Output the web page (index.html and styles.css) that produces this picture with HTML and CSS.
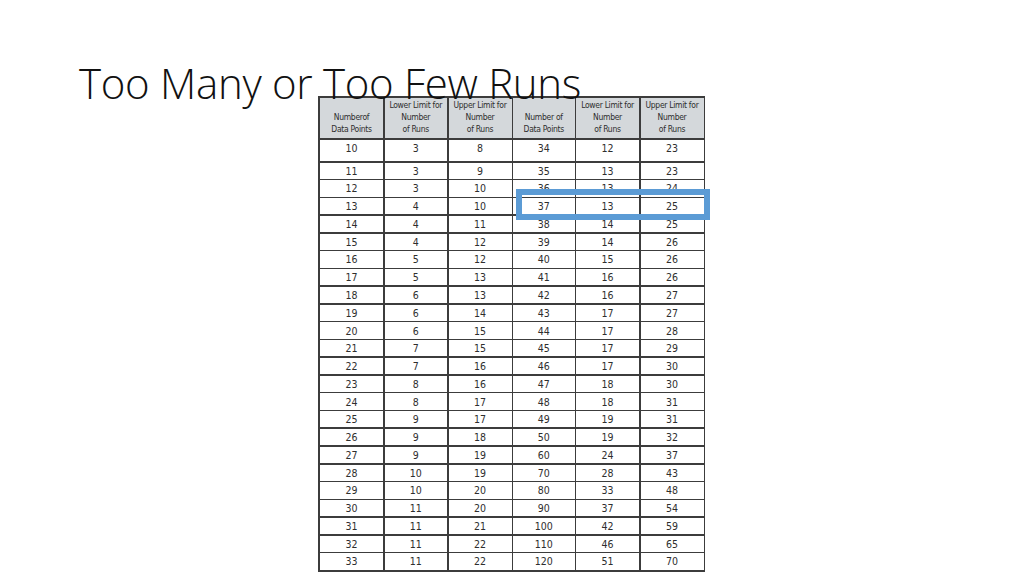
FILE: index.html
```html
<!DOCTYPE html>
<html>
<head>
<meta charset="utf-8">
<link rel="stylesheet" href="styles.css">
</head>
<body>
<div class="slide">
  <div class="title-box"><h1 class="title">Too Many or Too Few Runs</h1></div>
  <div class="table-wrap">
    <div class="grid" id="grid">
      <div class="hd two">Numberof<br>Data Points</div>
      <div class="hd">Lower Limit for<br>Number<br>of Runs</div>
      <div class="hd">Upper Limit for<br>Number<br>of Runs</div>
      <div class="hd two">Number of<br>Data Points</div>
      <div class="hd">Lower Limit for<br>Number<br>of Runs</div>
      <div class="hd">Upper Limit for<br>Number<br>of Runs</div>
    </div>
    <div class="highlight"></div>
  </div>
</div>
<script src="script.js"></script>
</body>
</html>
```
FILE: script.js
```js
const rows = [
  [10,3,8,34,12,23],[11,3,9,35,13,23],[12,3,10,36,13,24],[13,4,10,37,13,25],
  [14,4,11,38,14,25],[15,4,12,39,14,26],[16,5,12,40,15,26],[17,5,13,41,16,26],
  [18,6,13,42,16,27],[19,6,14,43,17,27],[20,6,15,44,17,28],[21,7,15,45,17,29],
  [22,7,16,46,17,30],[23,8,16,47,18,30],[24,8,17,48,18,31],[25,9,17,49,19,31],
  [26,9,18,50,19,32],[27,9,19,60,24,37],[28,10,19,70,28,43],[29,10,20,80,33,48],
  [30,11,20,90,37,54],[31,11,21,100,42,59],[32,11,22,110,46,65],[33,11,22,120,51,70]
];
const grid = document.getElementById('grid');
rows.forEach((r, i) => {
  r.forEach(v => {
    const d = document.createElement('div');
    d.className = i === 0 ? 'cell first' : 'cell';
    d.textContent = v;
    grid.appendChild(d);
  });
});
```
FILE: styles.css
```css
html, body {
  margin: 0;
  padding: 0;
  background: #ffffff;
}
.slide {
  width: 1024px;
  height: 576px;
  overflow: hidden;
  background: #ffffff;
}
.title-box {
  height: 96px;
  box-sizing: border-box;
  padding: 62px 0 0 79px;
  position: relative;
  z-index: 2;
}
.title {
  margin: 0;
  font-family: "Open Sans", "Liberation Sans", sans-serif;
  font-weight: 300;
  font-size: 42px;
  line-height: 42px;
  color: #111111;
  white-space: nowrap;
  letter-spacing: -0.3px;
}
.table-wrap {
  margin-left: 318px;
  width: 387px;
  position: relative;
}
.grid {
  display: grid;
  grid-template-columns: 63px 62.5px 63px 61.5px 63px 63px;
  grid-template-rows: 40px 21.5px repeat(23, 16.28px);
  gap: 1.5px;
  padding: 2px;
  background: #3c3c3c;
  width: 387px;
  box-sizing: border-box;
}
.hd {
  background: #d4d8db;
  display: flex;
  align-items: flex-end;
  justify-content: center;
  text-align: center;
  font-family: "Liberation Sans Narrow", "DejaVu Sans Condensed", "Liberation Sans", sans-serif;
  font-size: 8.5px;
  line-height: 12px;
  color: #2e2e2e;
  padding-bottom: 3px;
  letter-spacing: -0.3px;
}
.cell {
  background: #ffffff;
  display: flex;
  align-items: center;
  justify-content: center;
  font-family: "Liberation Sans Narrow", "DejaVu Sans Condensed", "Liberation Sans", sans-serif;
  font-size: 10.5px;
  color: #2e2e2e;
}
.cell.first {
  padding-bottom: 5px;
}
.highlight {
  position: absolute;
  left: 198px;
  top: 93px;
  width: 194px;
  height: 31px;
  box-sizing: border-box;
  border: 6px solid #5b9bd5;
}
```
